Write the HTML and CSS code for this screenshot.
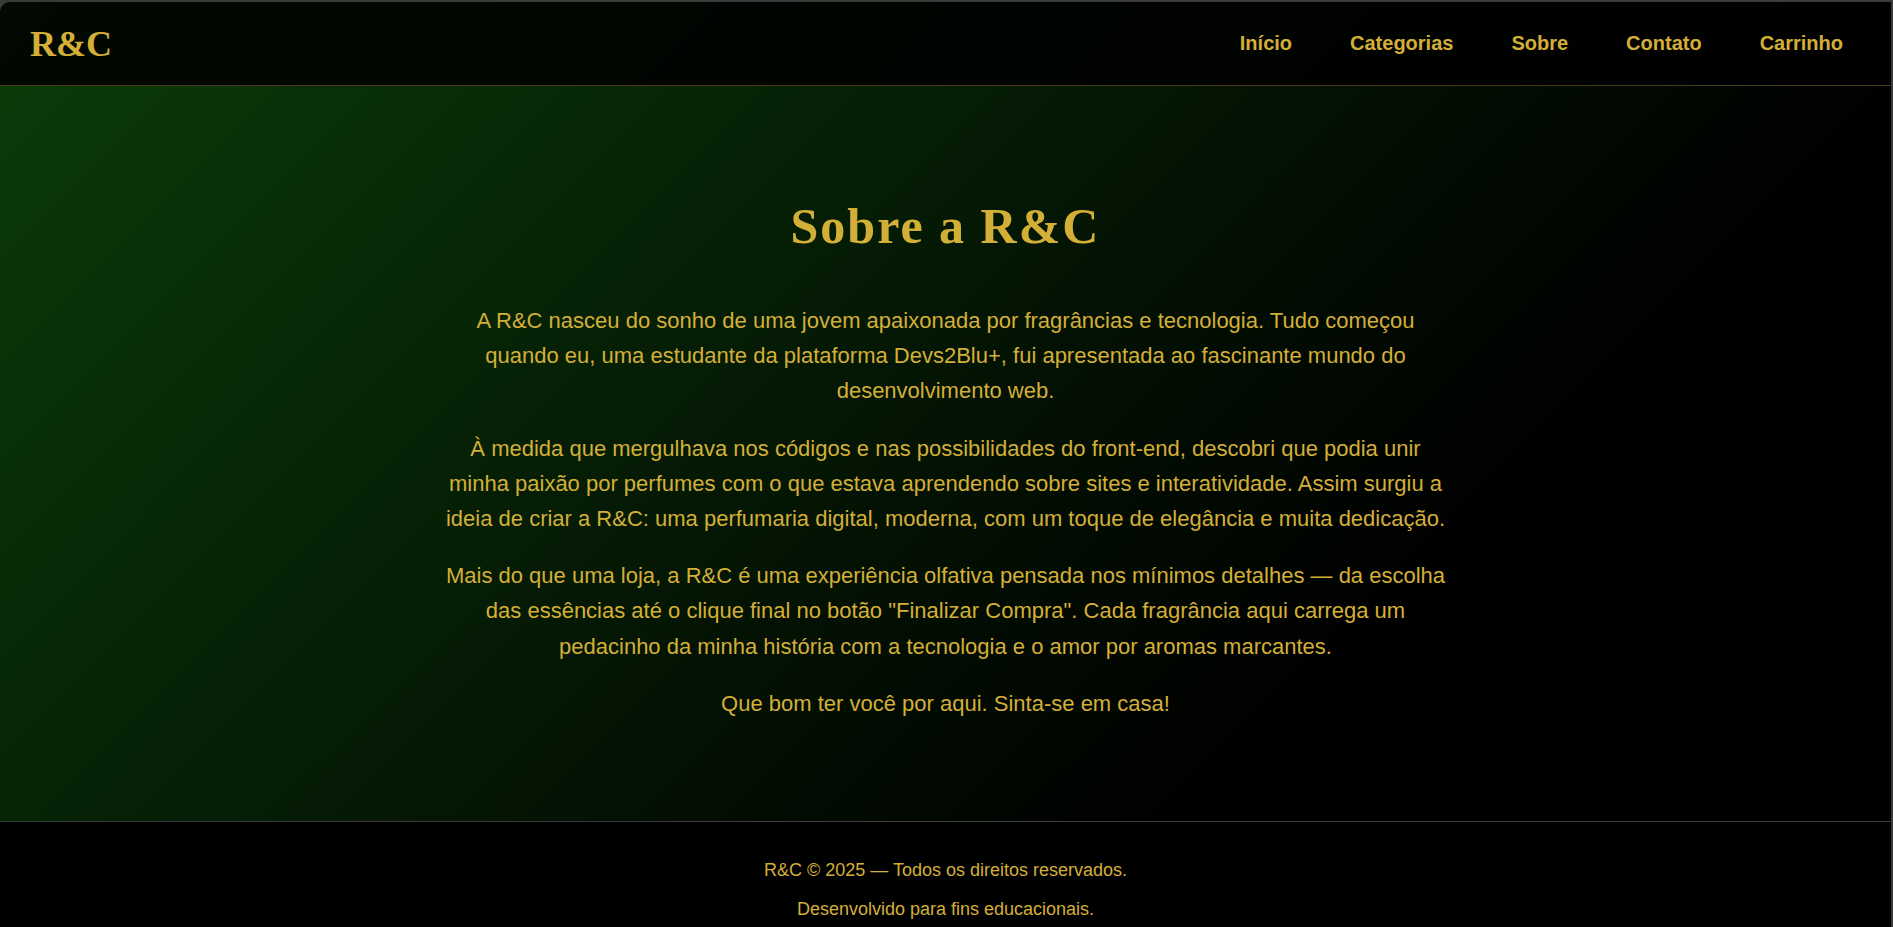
FILE: index.html
```html
<!DOCTYPE html>
<html lang="pt-BR">
<head>
<meta charset="utf-8">
<title>Sobre a R&amp;C</title>
<link rel="stylesheet" href="styles.css">
</head>
<body>
<div class="page">
  <header class="header">
    <div class="logo">R&amp;C</div>
    <nav class="nav">
      <a href="#">Início</a>
      <a href="#">Categorias</a>
      <a href="#">Sobre</a>
      <a href="#">Contato</a>
      <a href="#">Carrinho</a>
    </nav>
  </header>
  <main class="about">
    <h1 class="about-title">Sobre a R&amp;C</h1>
    <div class="about-text">
      <p>A R&amp;C nasceu do sonho de uma jovem apaixonada por fragrâncias e tecnologia. Tudo começou quando eu, uma estudante da plataforma Devs2Blu+, fui apresentada ao fascinante mundo do desenvolvimento web.</p>
      <p>À medida que mergulhava nos códigos e nas possibilidades do front-end, descobri que podia unir minha paixão por perfumes com o que estava aprendendo sobre sites e interatividade. Assim surgiu a ideia de criar a R&amp;C: uma perfumaria digital, moderna, com um toque de elegância e muita dedicação.</p>
      <p>Mais do que uma loja, a R&amp;C é uma experiência olfativa pensada nos mínimos detalhes — da escolha das essências até o clique final no botão "Finalizar Compra". Cada fragrância aqui carrega um pedacinho da minha história com a tecnologia e o amor por aromas marcantes.</p>
      <p>Que bom ter você por aqui. Sinta-se em casa!</p>
    </div>
  </main>
  <footer class="footer">
    <p>R&amp;C © 2025 — Todos os direitos reservados.</p>
    <p>Desenvolvido para fins educacionais.</p>
  </footer>
</div>
</body>
</html>
```
FILE: styles.css
```css
* {
  box-sizing: border-box;
}

body {
  margin: 0;
  padding: 2px 2px 0 0;
  background: #3b3b3b;
  color: #d4af37;
  font-family: Arial, "Liberation Sans", sans-serif;
  overflow: hidden;
}

.page {
  border-top-left-radius: 10px;
  overflow: hidden;
  background: linear-gradient(135deg, #0b3d0b, #000 70%);
}

.header {
  display: flex;
  justify-content: space-between;
  align-items: baseline;
  padding: 22px 48px 20px 30px;
  background: rgba(0, 0, 0, 0.85);
  border-bottom: 1px solid #4a3a18;
}

.logo {
  font-family: "Times New Roman", "Liberation Serif", serif;
  font-size: 36px;
  font-weight: bold;
  line-height: 41px;
}

.nav {
  display: flex;
  align-self: flex-start;
  gap: 58px;
  padding-top: 7px;
}

.nav a {
  color: inherit;
  font-size: 20px;
  font-weight: bold;
  line-height: 24px;
  text-decoration: none;
}

.about {
  padding: 112px 30px 100px;
  text-align: center;
}

.about-title {
  margin: 0 0 48px;
  font-family: "Times New Roman", "Liberation Serif", serif;
  font-size: 50px;
  line-height: 57px;
  letter-spacing: 2px;
}

.about-text {
  max-width: 1000px;
  margin: 0 auto;
  font-size: 22px;
  line-height: 1.6;
}

.about-text p {
  margin: 0 0 22px;
}

.about-text p:last-child {
  margin-bottom: 0;
}

.footer {
  padding: 38px 20px 20px;
  background: #000;
  border-top: 1px solid #3b3b3b;
  font-size: 18px;
  line-height: 21px;
  text-align: center;
}

.footer p {
  margin: 0 0 18px;
}
```
